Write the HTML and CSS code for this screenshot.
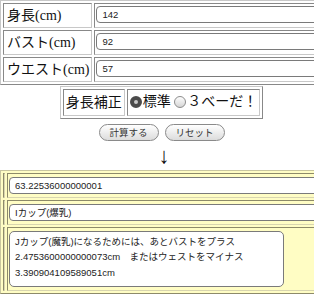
FILE: index.html
```html
<!DOCTYPE html>
<html lang="ja">
<head>
  <meta charset="UTF-8" />
  <meta name="viewport" content="width=device-width, initial-scale=1.0"/>
  <title>カップ計算</title>
  <link rel="stylesheet" href="styles.css">
</head>
<body>
  <div class="page">
    <table class="inputs">
      <tr><th>身長(cm)</th><td><input type="text" class="field" value="142"></td></tr>
      <tr><th>バスト(cm)</th><td><input type="text" class="field" value="92"></td></tr>
      <tr><th>ウエスト(cm)</th><td><input type="text" class="field" value="57"></td></tr>
    </table>

    <table class="adjust">
      <tr>
        <th>身長補正</th>
        <td>
          <label><input type="radio" name="adj" checked>標準</label>
          <label><input type="radio" name="adj">３べーだ！</label>
        </td>
      </tr>
    </table>

    <div class="actions">
      <button type="button">計算する</button>
      <button type="button">リセット</button>
    </div>

    <div class="arrow">↓</div>

    <table class="results">
      <tr><th></th><td><input type="text" class="field" value="63.22536000000001" readonly></td></tr>
      <tr><th></th><td><input type="text" class="field" value="Iカップ(爆乳)" readonly></td></tr>
      <tr><th></th><td><textarea readonly>Jカップ(魔乳)になるためには、あとバストをプラス
2.4753600000000073cm　またはウェストをマイナス
3.390904109589051cm</textarea></td></tr>
    </table>
  </div>
</body>
</html>
```

FILE: styles.css
```css
body {
  margin: 0;
  overflow: hidden;
  background: #fff;
  font-family: 'Liberation Serif', 'Noto Sans CJK JP', serif;
  color: #111;
}

.page {
  width: 323px;
}

table {
  border-collapse: separate;
  border-spacing: 2px;
  border: 1px solid;
  border-color: #c8c8c8 #888 #888 #c8c8c8;
}

th, td {
  border: 1px solid;
  border-color: #888 #c8c8c8 #c8c8c8 #888;
  padding: 1px;
  font-weight: normal;
  text-align: left;
  white-space: nowrap;
}

.field {
  box-sizing: border-box;
  display: block;
  height: 17px;
  padding: 0 5px;
  border: 1px solid #7a7a7a;
  border-radius: 4px;
  background: #fff;
  font-family: 'Liberation Sans', 'Noto Sans CJK JP', sans-serif;
  font-size: 9.5px;
  color: #222;
  outline: none;
}

/* top form */
.inputs {
  width: 323px;
}

.inputs th {
  font-size: 14px;
  line-height: 21px;
  padding: 1px 2px 1px 3px;
  width: 1px;
}

.inputs td {
  vertical-align: top;
  padding: 1px;
}

.inputs .field {
  width: 240px;
  margin-top: 1px;
}

/* height adjust */
.adjust {
  margin: 1px auto 0;
}

.adjust th,
.adjust td {
  font-size: 14px;
  line-height: 21px;
  padding: 1px 2px;
}

.adjust label {
  display: inline-flex;
  align-items: center;
}

.adjust input {
  appearance: none;
  width: 12px;
  height: 12px;
  margin: 0 1px 0 0;
  border-radius: 50%;
  border: 1px solid #8c8c8c;
  background: linear-gradient(#fdfdfd, #d6d6d6);
}

.adjust input:checked {
  border: 4px solid #4b4b4b;
  background: #c9c9c9;
}

.actions {
  margin-top: 5px;
  height: 17px;
  text-align: center;
  font-size: 0;
}

.actions button {
  display: inline-block;
  vertical-align: top;
  width: 60px;
  height: 17px;
  margin: 0 3px;
  padding: 0;
  border: 1px solid #8a8a8a;
  border-radius: 9px;
  background: linear-gradient(#ffffff, #dcdcdc);
  font-family: 'Liberation Sans', 'Noto Sans CJK JP', sans-serif;
  font-size: 9.5px;
  color: #333;
}

.arrow {
  height: 29px;
  text-align: center;
  font-family: 'Liberation Sans', sans-serif;
  font-size: 22px;
  line-height: 29px;
  padding-left: 5px;
}

/* results */
.results {
  width: 323px;
  background: #fffdc4;
  border-color: #c9c6a0 #8d8a6a #8d8a6a #c9c6a0;
}

.results th,
.results td {
  background: #fffdc4;
  border-color: #8d8a6a #d8d5b0 #d8d5b0 #8d8a6a;
}

.results th {
  width: 0;
  padding: 0;
}

.results td {
  padding: 3px 1px;
}

.results .field {
  width: 330px;
}

.results textarea {
  box-sizing: border-box;
  display: block;
  width: 275px;
  height: 56px;
  padding: 2px 5px;
  border: 1px solid #7a7a7a;
  border-radius: 5px;
  background: #fff;
  font-family: 'Liberation Sans', 'Noto Sans CJK JP', sans-serif;
  font-size: 9.5px;
  line-height: 15.5px;
  color: #222;
  resize: none;
  overflow: hidden;
  outline: none;
}
```
